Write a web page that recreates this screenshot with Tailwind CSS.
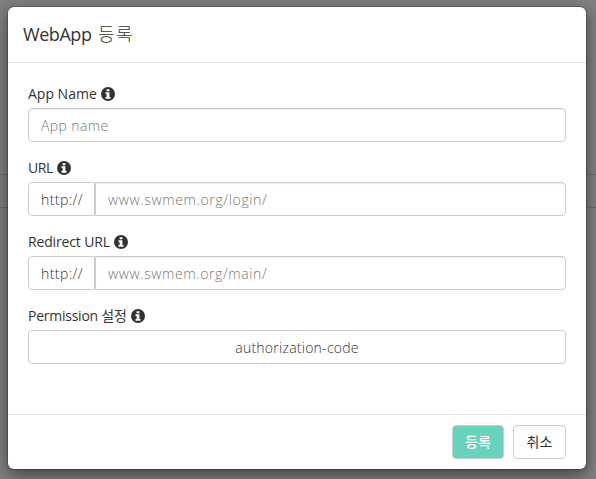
<!DOCTYPE html>
<html lang="ko">
<head>
<meta charset="utf-8">
<title>WebApp 등록</title>
<script src="https://cdn.jsdelivr.net/npm/@tailwindcss/browser@4"></script>
</head>
<body class="relative h-[479px] overflow-hidden bg-[#7f7f7f] font-['Open_Sans','Noto_Sans_CJK_KR',sans-serif] text-[14px] leading-5 text-[#333]">
<svg class="hidden"><symbol id="info" viewBox="0 0 14 14"><circle cx="7" cy="7" r="7" fill="#333"/><path d="M5.6 2.2h2.8v2.1H5.6zM4.5 5.3h3.9v4.8h1.1v1.7h-5v-1.7h1.1V7H4.5z" fill="#fff"/></symbol></svg>
<div class="absolute inset-x-0 top-[174px] h-[34px] border-y border-[#6a6a6a]"></div>
<div class="relative ml-2 mt-[7px] flex h-[462px] w-[578px] flex-col rounded-[6px] bg-white shadow-[0_0_0_1px_rgba(0,0,0,0.2),0_5px_15px_rgba(0,0,0,0.5)]">
  <header class="flex h-14 shrink-0 items-center border-b border-[#e5e5e5] pl-[15px] pb-0.5">
    <h4 class="whitespace-nowrap text-[18px] leading-[26px]"><span class="inline-block w-[75px] tracking-[-0.45px]">WebApp</span><span class="font-light tracking-[1.5px]">등록</span></h4>
  </header>
  <main class="flex flex-1 flex-col gap-4 px-5 pt-[21px]">
    <div>
      <label class="mb-[4px] flex h-5 items-center gap-1"><span class="w-[69px] whitespace-nowrap">App Name</span><svg class="size-[14px]"><use href="#info"/></svg></label>
      <input class="block h-[34px] w-full rounded border border-[#ccc] px-3 pt-px font-light tracking-[0.4px] shadow-[inset_0_1px_1px_rgba(0,0,0,0.075)] placeholder:text-[#777]" placeholder="App name">
    </div>
    <div>
      <label class="mb-[4px] flex h-5 items-center gap-1"><span class="w-[25px] whitespace-nowrap tracking-[-0.4px]">URL</span><svg class="size-[14px]"><use href="#info"/></svg></label>
      <div class="flex h-[34px]">
        <span class="flex w-[67px] items-center rounded-l border border-[#ccc] pl-3 pt-px font-light tracking-[0.45px]">http://</span>
        <input class="min-w-0 flex-1 rounded-r border border-[#ccc] px-3 pt-px font-light tracking-[0.64px] shadow-[inset_0_1px_1px_rgba(0,0,0,0.075)] placeholder:text-[#777]" placeholder="www.swmem.org/login/">
      </div>
    </div>
    <div>
      <label class="mb-[4px] flex h-5 items-center gap-1"><span class="w-[82px] whitespace-nowrap tracking-[-0.15px]">Redirect URL</span><svg class="size-[14px]"><use href="#info"/></svg></label>
      <div class="flex h-[34px]">
        <span class="flex w-[67px] items-center rounded-l border border-[#ccc] pl-3 pt-px font-light tracking-[0.45px]">http://</span>
        <input class="min-w-0 flex-1 rounded-r border border-[#ccc] px-3 pt-px font-light tracking-[0.61px] shadow-[inset_0_1px_1px_rgba(0,0,0,0.075)] placeholder:text-[#777]" placeholder="www.swmem.org/main/">
      </div>
    </div>
    <div>
      <label class="mb-[4px] flex h-5 items-center gap-1"><span class="w-[99px] whitespace-nowrap tracking-[-0.25px]">Permission 설정</span><svg class="size-[14px]"><use href="#info"/></svg></label>
      <button class="block h-[34px] w-full rounded border border-[#ccc] pt-px font-light tracking-[0.25px]">authorization-code</button>
    </div>
  </main>
  <footer class="flex h-[55px] shrink-0 justify-end gap-[9px] border-t border-[#e5e5e5] pr-5 pt-[10px]">
    <button class="h-[34px] w-[52px] rounded border border-[#ccc] bg-[#69d2bd] font-medium text-white">등록</button>
    <button class="h-[34px] w-[53px] rounded border border-[#ccc] bg-white">취소</button>
  </footer>
</div>
</body>
</html>
